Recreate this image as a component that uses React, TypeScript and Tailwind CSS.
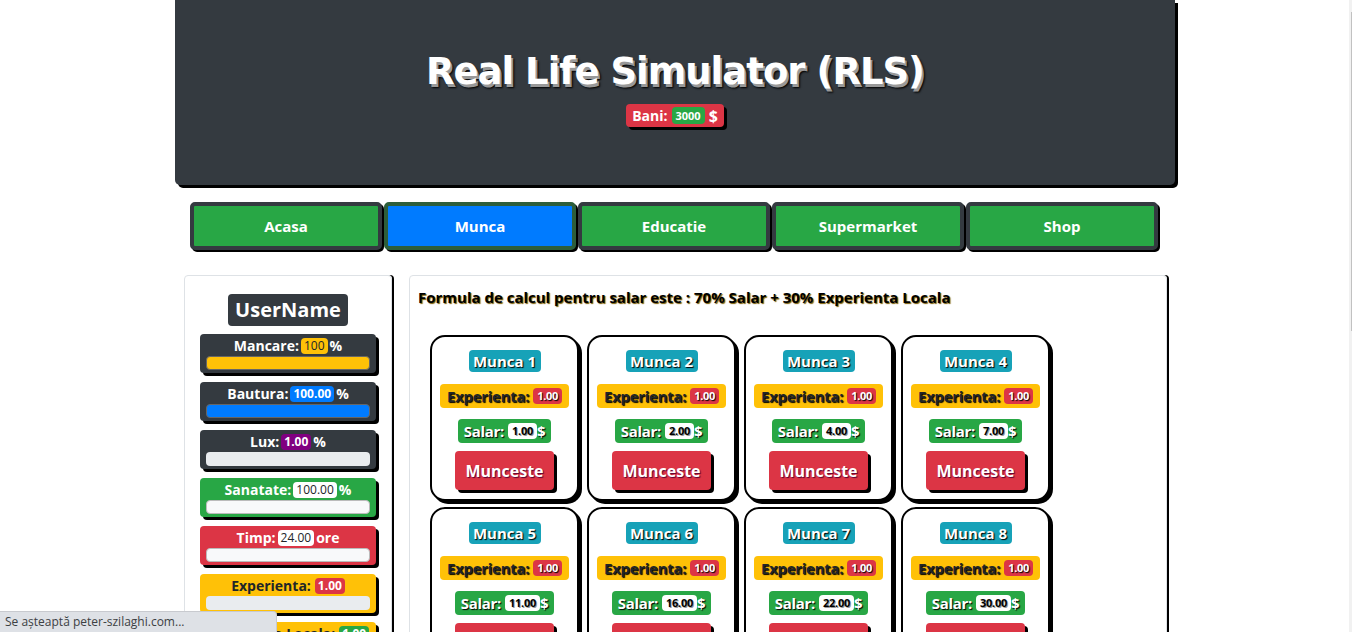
import React from "react";

const jobs = [
  { name: "Munca 1", exp: "1.00", salar: "1.00" },
  { name: "Munca 2", exp: "1.00", salar: "2.00" },
  { name: "Munca 3", exp: "1.00", salar: "4.00" },
  { name: "Munca 4", exp: "1.00", salar: "7.00" },
  { name: "Munca 5", exp: "1.00", salar: "11.00" },
  { name: "Munca 6", exp: "1.00", salar: "16.00" },
  { name: "Munca 7", exp: "1.00", salar: "22.00" },
  { name: "Munca 8", exp: "1.00", salar: "30.00" },
];

const tabs = ["Acasa", "Munca", "Educatie", "Supermarket", "Shop"];

function JobCard({ job }: { job: { name: string; exp: string; salar: string } }) {
  return (
    <div className="flex h-[166px] w-[149px] flex-col items-center rounded-[15px] border-2 border-black bg-white pt-[13px] shadow-[3px_3px_0_#000]">
      <div className="flex h-[22px] w-[72px] items-center justify-center rounded-[4px] bg-[#17a2b8] text-[15px] font-bold text-white [text-shadow:1px_1px_1px_#000]">
        {job.name}
      </div>
      <div className="mt-[12px] flex h-[24px] items-center gap-[4px] rounded-[4px] bg-[#ffc107] px-[7px] text-[15px] font-bold tracking-[-0.3px] text-[#212529] [text-shadow:1px_1px_1px_#000]">
        Experienta:
        <span className="rounded-[4px] bg-[#dc3545] px-[4px] text-[11px] leading-[16px] text-white">{job.exp}</span>
      </div>
      <div className="mt-[11px] flex h-[24px] items-center rounded-[4px] bg-[#28a745] px-[6px] text-[15px] font-bold tracking-[-0.3px] text-white [text-shadow:1px_1px_1px_#000]">
        Salar:
        <span className="ml-[4px] rounded-[4px] bg-white px-[4px] text-[11px] leading-[16px] text-black [text-shadow:1px_1px_0_#999]">
          {job.salar}
        </span>
        $
      </div>
      <button className="mt-[8px] flex h-[39px] w-[99px] items-center justify-center rounded-[4px] bg-[#dc3545] text-[16px] font-bold text-white shadow-[3px_3px_0_#000] [text-shadow:1px_1px_1px_#5a0030]">
        Munceste
      </button>
    </div>
  );
}

export default function App() {
  return (
    <div className="relative h-[632px] overflow-hidden bg-white font-['Open_Sans',sans-serif]">
      <div className="w-[1350px]">
        <div className="mx-auto w-[1000px]">
          <header className="flex h-[185px] flex-col items-center rounded-b-[5px] bg-[#343a40] pt-[48px] shadow-[3px_3px_0_#000]">
            <h1 className="font-['DejaVu_Sans',sans-serif] text-[37px] font-bold leading-[48px] tracking-[-1px] text-white [text-shadow:2px_3px_0_#999,3px_4px_2px_#000]">
              Real Life Simulator (RLS)
            </h1>
            <div className="mt-[8px] flex h-[23px] items-center gap-[4px] rounded-[4px] bg-[#dc3545] px-[6px] text-[14px] font-bold text-white shadow-[3px_3px_0_#000]">
              Bani:
              <span className="rounded-[4px] bg-[#28a745] px-[4px] text-[11px] leading-[17px]">3000</span>
              <span className="text-[16px]">$</span>
            </div>
          </header>

          <nav className="ml-[15px] mt-[17px] flex gap-[2px]">
            {tabs.map((t) => (
              <div
                key={t}
                className={
                  t === "Munca"
                    ? "flex h-[48px] w-[192px] items-center justify-center rounded-[5px] border-4 border-[#2d5e3b] bg-[#007bff] text-[15px] font-bold text-white shadow-[2px_2px_0_#000]"
                    : "flex h-[48px] w-[192px] items-center justify-center rounded-[5px] border-4 border-[#343a40] bg-[#28a745] text-[15px] font-bold text-white shadow-[2px_2px_0_#000]"
                }
              >
                {t}
              </div>
            ))}
          </nav>

          <div className="mt-[25px] flex items-start">
            <aside className="ml-[9px] flex h-[420px] w-[208px] flex-col items-center rounded-[4px] border border-[#dee2e6] pt-[18px] shadow-[2px_0_0_#000]">
              <div className="flex h-[32px] w-[120px] items-center justify-center rounded-[4px] bg-[#343a40] text-[20px] font-bold text-white">
                UserName
              </div>
              <div className="mt-[8px] flex w-[176px] flex-col gap-[9px]">
                <div className="flex h-[39px] flex-col items-center rounded-[4px] bg-[#343a40] px-[6px] pt-[2px] text-[14px] font-bold text-white shadow-[3px_3px_0_#000]">
                  <div className="flex h-[19px] items-center gap-[2px] leading-[19px]">
                    Mancare:
                    <span className="rounded-[4px] bg-[#ffc107] px-[3px] text-[12px] font-normal leading-[16px] text-[#212529]">100</span>%
                  </div>
                  <div className="mt-[1px] h-[14px] w-full rounded-[4px] border border-[#666] bg-[#ffc107]" />
                </div>
                <div className="flex h-[39px] flex-col items-center rounded-[4px] bg-[#343a40] px-[6px] pt-[2px] text-[14px] font-bold text-white shadow-[3px_3px_0_#000]">
                  <div className="flex h-[19px] items-center gap-[2px] leading-[19px]">
                    Bautura:
                    <span className="rounded-[4px] bg-[#007bff] px-[3px] text-[12px] leading-[16px] text-white">100.00</span>%
                  </div>
                  <div className="mt-[1px] h-[14px] w-full rounded-[4px] border border-[#666] bg-[#007bff]" />
                </div>
                <div className="flex h-[39px] flex-col items-center rounded-[4px] bg-[#343a40] px-[6px] pt-[2px] text-[14px] font-bold text-white shadow-[3px_3px_0_#000]">
                  <div className="flex h-[19px] items-center gap-[2px] leading-[19px]">
                    Lux:
                    <span className="rounded-[4px] bg-[#800080] px-[3px] text-[12px] leading-[16px] text-white">1.00</span>%
                  </div>
                  <div className="mt-[1px] h-[14px] w-full rounded-[4px] bg-[#e9ecef]" />
                </div>
                <div className="flex h-[39px] flex-col items-center rounded-[4px] bg-[#28a745] px-[6px] pt-[2px] text-[14px] font-bold text-white shadow-[3px_3px_0_#000]">
                  <div className="flex h-[19px] items-center gap-[2px] leading-[19px]">
                    Sanatate:
                    <span className="rounded-[4px] bg-white px-[3px] text-[12px] font-normal leading-[16px] text-[#212529]">100.00</span>%
                  </div>
                  <div className="mt-[1px] h-[14px] w-full rounded-[4px] border border-[#bbb] bg-[#f8f9fa]" />
                </div>
                <div className="flex h-[39px] flex-col items-center rounded-[4px] bg-[#dc3545] px-[6px] pt-[2px] text-[14px] font-bold text-white shadow-[3px_3px_0_#000]">
                  <div className="flex h-[19px] items-center gap-[2px] leading-[19px]">
                    Timp:
                    <span className="rounded-[4px] bg-white px-[3px] text-[12px] font-normal leading-[16px] text-[#212529]">24.00</span>ore
                  </div>
                  <div className="mt-[1px] h-[14px] w-full rounded-[4px] border border-[#bbb] bg-[#f8f9fa]" />
                </div>
                <div className="flex h-[39px] flex-col items-center rounded-[4px] bg-[#ffc107] px-[6px] pt-[2px] text-[14px] font-bold text-[#212529] shadow-[3px_3px_0_#000]">
                  <div className="flex h-[19px] items-center gap-[4px] leading-[19px]">
                    Experienta:
                    <span className="rounded-[4px] bg-[#dc3545] px-[3px] text-[12px] leading-[16px] text-white">1.00</span>
                  </div>
                  <div className="mt-[1px] h-[14px] w-full rounded-[4px] bg-[#e9ecef]" />
                </div>
                <div className="flex h-[39px] flex-col items-center rounded-[4px] bg-[#ffc107] px-[6px] pt-[2px] text-[14px] font-bold text-[#212529] shadow-[3px_3px_0_#000]">
                  <div className="flex h-[19px] items-center gap-[4px] leading-[19px]">
                    Experienta Locala:
                    <span className="rounded-[4px] bg-[#28a745] px-[3px] text-[12px] leading-[16px] text-white">1.00</span>
                  </div>
                  <div className="mt-[1px] h-[14px] w-full rounded-[4px] bg-[#e9ecef]" />
                </div>
              </div>
            </aside>

            <main className="ml-[17px] h-[420px] w-[758px] rounded-[4px] border border-[#dee2e6] pl-[8px] pt-[11px] shadow-[2px_0_0_#000]">
              <p className="text-[15px] font-bold leading-[20px] text-black [text-shadow:1px_1px_1px_#7a5a00]">
                Formula de calcul pentru salar este : 70% Salar + 30% Experienta Locala
              </p>
              <div className="ml-[12px] mt-[28px] grid grid-cols-[149px_149px_149px_149px] gap-x-[8px] gap-y-[6px]">
                {jobs.map((j) => (
                  <JobCard key={j.name} job={j} />
                ))}
              </div>
            </main>
          </div>
        </div>
      </div>

      <div className="absolute right-0 top-0 h-full w-[3px] bg-[#f1f1f1]">
        <div className="ml-[2px] mt-[12px] h-[319px] w-[1px] bg-[#c1c1c1]" />
      </div>

      <div className="absolute bottom-0 left-0 flex h-[21px] w-[277px] items-center rounded-tr-[4px] border-r border-t border-[#c8cacf] bg-[#dee1e6] pl-[5px] text-[12px] text-[#3c4043]">
        Se așteaptă peter-szilaghi.com...
      </div>
    </div>
  );
}
